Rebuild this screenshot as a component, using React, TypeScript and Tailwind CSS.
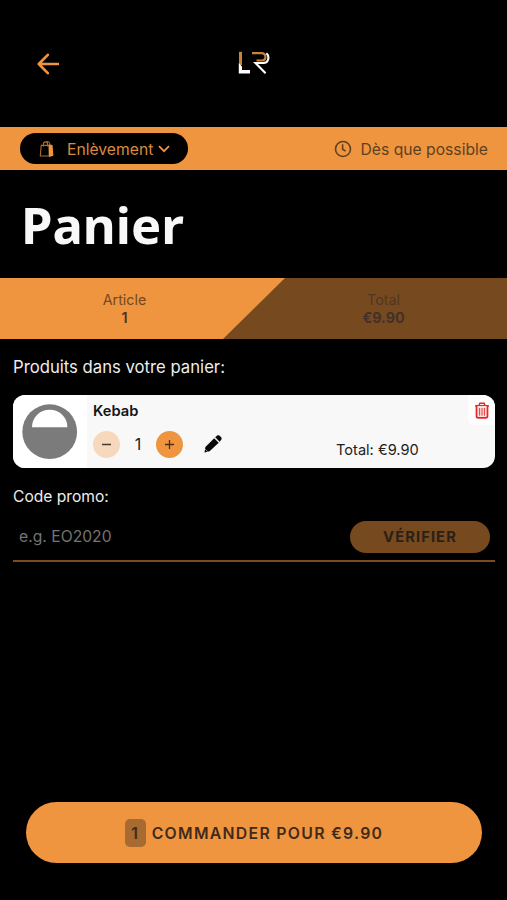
import { useState } from "react";

const formatPrice = (value: number) => `€${value.toFixed(2)}`;

function Logo() {
  return (
    <svg width="32" height="24" viewBox="0 0 32 24" fill="none">
      <path d="M2.5 0.8V14" stroke="#c98338" strokeWidth="3" />
      <path d="M0.8 12L4 15.5V19H12V22.5H0.8Z" fill="#fff" />
      <path d="M14 2.2H23.5C28.5 2.2 28.8 9.2 24.3 9.5H18.5" stroke="#c98338" strokeWidth="2.2" />
      <path d="M28.4 2.2C31.8 5.2 30.8 11.8 25.3 12H17.5L27.6 22.3" stroke="#fff" strokeWidth="2.1" />
    </svg>
  );
}

function BackArrow() {
  return (
    <svg width="22" height="22" viewBox="0 0 22 22" fill="none" stroke="#ef953f" strokeWidth="2.6">
      <path d="M10.8 1.8L1.8 11L10.8 20.2M1.8 11H21.5" strokeLinejoin="round" strokeLinecap="round" />
    </svg>
  );
}

function BagIcon() {
  return (
    <svg width="16" height="18" viewBox="0 0 16 18" fill="none" stroke="#ad6d2e" strokeWidth="1.1">
      <path d="M2.2 5.4H10L10.2 16H1.3Z" />
      <path d="M10.4 5L13 5.4L13.8 15.4L10.6 16.2Z" fill="#ef953f" stroke="#ef953f" />
      <path d="M4.4 6.5V4C4.4 1.2 8.6 1.2 8.6 4V6.5M6.8 2.1C8.8 0.6 11 2 11 5" />
    </svg>
  );
}

function ClockIcon() {
  return (
    <svg width="18" height="18" viewBox="0 0 18 18" fill="none" stroke="#60401f" strokeWidth="1.6">
      <circle cx="9" cy="9" r="7.5" />
      <path d="M8.6 4.2V9.2L11.6 11.2" />
    </svg>
  );
}

function PencilIcon() {
  return (
    <svg width="18" height="18" viewBox="0 0 18 18" fill="#090909">
      <path d="M10.2 3.3L14.7 7.7L5.6 16.2L0.5 17.5L1.4 12Z" />
      <path d="M11.2 2.3L12.9 0.8C13.9 0 15.2 0.2 16 1L17.1 2.2C17.9 3 17.9 4 17.1 4.9L15.6 6.7Z" />
      <path d="M1.2 14.3L3.7 16.6" stroke="#f8f8f8" strokeWidth="0.6" />
    </svg>
  );
}

function TrashIcon() {
  return (
    <svg width="14" height="17" viewBox="0 0 14 17" fill="none" stroke="#e5262b">
      <path d="M0.2 3.9H13.8" strokeWidth="1.8" />
      <path d="M4 3.5L4.8 1.3H9.2L10 3.5" strokeWidth="1.4" />
      <path
        d="M1.5 4V14C1.5 15.3 2.2 15.9 3.2 15.9H10.8C11.8 15.9 12.5 15.3 12.5 14V4"
        fill="#fbdcdc"
        strokeWidth="1.7"
      />
      <path d="M4.6 6V13.6M7 6V13.6M9.4 6V13.6" strokeWidth="0.9" />
    </svg>
  );
}

function BowlImage() {
  return (
    <svg width="56" height="56" viewBox="0 0 56 56">
      <circle cx="27.7" cy="27.7" r="27.4" fill="#7b7b7b" />
      <path d="M10 23.3C10 13 18 5.8 27.7 5.8S45.4 13 45.4 23.3Z" fill="#fff" />
    </svg>
  );
}

export default function App() {
  const [quantity, setQuantity] = useState(1);
  const total = formatPrice(quantity * 9.9);

  return (
    <div className="flex h-[900px] w-full flex-col bg-black font-['Inter',sans-serif] text-[16px] leading-5 text-[#ededed]">
      <header className="grid h-[127px] grid-cols-3 items-center px-[37px]">
        <button className="cursor-pointer">
          <BackArrow />
        </button>
        <div className="flex justify-center pb-[2px] pl-[2px]">
          <Logo />
        </div>
      </header>

      <div className="flex h-[43px] items-center justify-between bg-[#ef953f] pr-[19px] pl-5">
        <button className="flex h-[31px] w-[168px] cursor-pointer items-center rounded-full bg-black pl-[19px] text-[#ef953f]">
          <BagIcon />
          <span className="ml-3 pt-[2px] text-[15.7px] text-[#d88a40]">Enlèvement</span>
          <svg className="ml-[5px]" width="12" height="8" viewBox="0 0 12 8" fill="none">
            <path d="M1 1.2L6 6.2L11 1.2" stroke="#ef953f" strokeWidth="1.7" />
          </svg>
        </button>
        <div className="flex items-center gap-2 text-[15.7px] text-[#60401f]">
          <ClockIcon />
          <span className="pt-[2px]">Dès que possible</span>
        </div>
      </div>

      <h1 className="flex h-[108px] items-center pt-[2px] pl-[21px] font-['Noto_Sans',sans-serif] text-[50.7px] font-bold text-[#f8f8f8]">
        Panier
      </h1>

      <div className="h-[61px] bg-[#764a1e] text-center text-[14.3px] leading-[18px]">
        <div className="flex h-full">
          <div className="w-[285px] bg-[#ef953f] pt-[13px] pr-9 text-[#74491f] [clip-path:polygon(0_0,100%_0,223px_100%,0_100%)]">
            <div>Article</div>
            <div className="font-semibold text-[#493322]">{quantity}</div>
          </div>
          <div className="flex-1 pt-[13px] pr-[25px] text-[#513624]">
            <div>Total</div>
            <div className="font-bold text-[#43302a]">{total}</div>
          </div>
        </div>
      </div>

      <main className="flex flex-1 flex-col px-[13px]">
        <h2 className="mt-[18px] text-[16.7px]">Produits dans votre panier:</h2>

        <div className="mt-[18px] flex h-[73px] w-[482px] overflow-hidden rounded-xl bg-[#f8f8f8] text-[#222]">
          <div className="w-[74px] bg-white pt-[9px] pl-[9px]">
            <BowlImage />
          </div>
          <div className="w-[143px] pt-[6px] pl-[6px]">
            <div className="text-[14.7px] font-semibold text-[#151515]">Kebab</div>
            <div className="mt-[10px] flex items-center">
              <button
                className="flex size-[27px] cursor-pointer items-center justify-center rounded-full bg-[#f6d8bc]"
                onClick={() => setQuantity(Math.max(1, quantity - 1))}
              >
                <svg width="9" height="9" viewBox="0 0 9 9" stroke="#4a3b30" strokeWidth="1.3">
                  <path d="M0 4.5H9" />
                </svg>
              </button>
              <span className="w-[36px] pb-[2px] text-center">{quantity}</span>
              <button
                className="flex size-[27px] shrink-0 cursor-pointer items-center justify-center rounded-full bg-[#ef953f]"
                onClick={() => setQuantity(quantity + 1)}
              >
                <svg width="9" height="9" viewBox="0 0 9 9" stroke="#4a2f17" strokeWidth="1.3">
                  <path d="M0 4.5H9M4.5 0V9" />
                </svg>
              </button>
              <button className="ml-[21px] cursor-pointer pb-[1px]">
                <PencilIcon />
              </button>
            </div>
          </div>
          <div className="flex flex-1 items-end pb-[8px] pl-[106px] text-[14.6px]">Total: {total}</div>
          <button className="flex h-[30px] w-[27px] cursor-pointer items-center justify-center rounded-bl-md bg-[#fdfdfd]">
            <TrashIcon />
          </button>
        </div>

        <h2 className="mt-[19px] text-[15.6px]">Code promo:</h2>

        <div className="mt-[11px] flex h-[44px] w-[482px] items-center justify-between border-b-2 border-b-[#7a4b20] pr-[5px] pb-[5px] pl-[6px]">
          <input
            className="w-[200px] text-[15.7px] outline-none placeholder:text-[#747474]"
            placeholder="e.g. EO2020"
          />
          <button className="h-8 w-[140px] cursor-pointer rounded-full bg-[#764a1e] text-[14.7px] font-bold tracking-[1.1px] text-[#2b1f18]">
            VÉRIFIER
          </button>
        </div>
      </main>

      <footer className="px-[26px] pb-[37px]">
        <button className="flex h-[61px] w-[456px] cursor-pointer items-center justify-center gap-[6px] rounded-full bg-[#ef953f] text-[15.8px] font-semibold tracking-[1.3px] text-[#3f2b1a]">
          <span className="flex h-7 w-[21px] items-center justify-center rounded-[5px] bg-[#a76a31] pt-[2px]">
            {quantity}
          </span>
          <span className="pt-[2px]">COMMANDER POUR {total}</span>
        </button>
      </footer>
    </div>
  );
}
